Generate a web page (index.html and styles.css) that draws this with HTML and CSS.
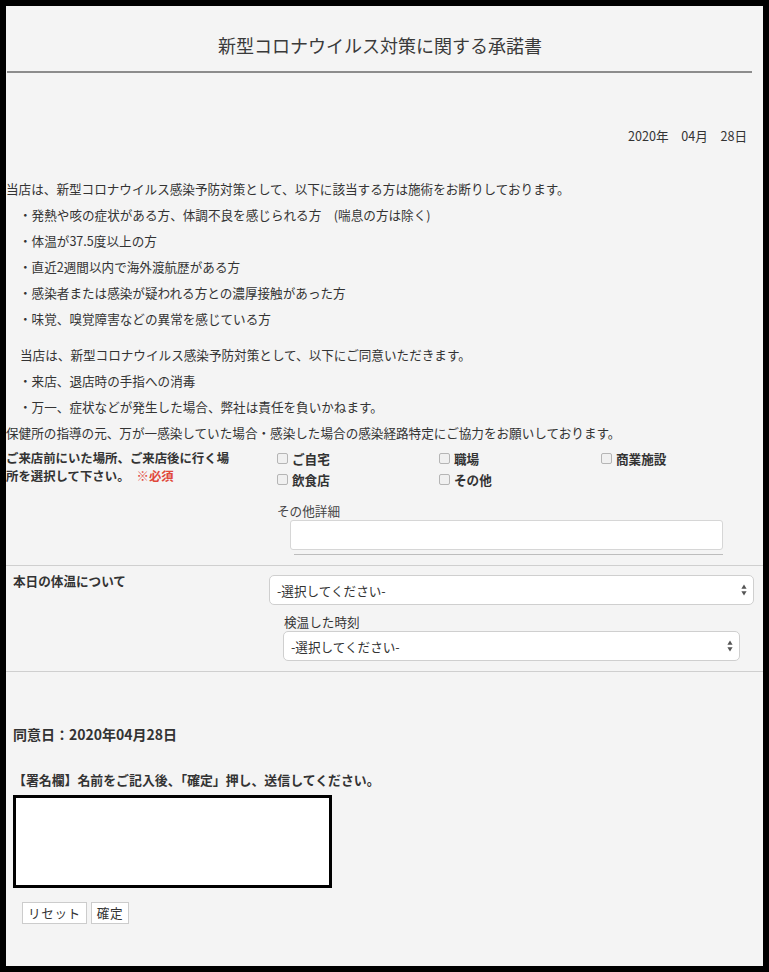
FILE: index.html
```html
<!DOCTYPE html>
<html lang="ja">
<head>
<meta charset="utf-8">
<title>新型コロナウイルス対策に関する承諾書</title>
<link rel="stylesheet" href="styles.css">
</head>
<body>
<div class="frame">
  <header class="head">
    <h1 class="title">新型コロナウイルス対策に関する承諾書</h1>
  </header>
  <div class="rule"></div>
  <p class="date">2020年　04月　28日</p>

  <div class="notice">
    <p class="line">当店は、新型コロナウイルス感染予防対策として、以下に該当する方は施術をお断りしております。</p>
    <p class="line ind">・発熱や咳の症状がある方、体調不良を感じられる方　(喘息の方は除く)</p>
    <p class="line ind">・体温が37.5度以上の方</p>
    <p class="line ind">・直近2週間以内で海外渡航歴がある方</p>
    <p class="line ind">・感染者または感染が疑われる方との濃厚接触があった方</p>
    <p class="line ind">・味覚、嗅覚障害などの異常を感じている方</p>
  </div>
  <div class="notice2">
    <p class="line ind2">当店は、新型コロナウイルス感染予防対策として、以下にご同意いただきます。</p>
    <p class="line ind">・来店、退店時の手指への消毒</p>
    <p class="line ind">・万一、症状などが発生した場合、弊社は責任を負いかねます。</p>
    <p class="line">保健所の指導の元、万が一感染していた場合・感染した場合の感染経路特定にご協力をお願いしております。</p>
  </div>

  <section class="place">
    <div class="q-label">
      <div class="q-row">ご来店前にいた場所、ご来店後に行く場</div>
      <div class="q-row q-row2"><span>所を選択して下さい。</span><span class="req">※必須</span></div>
    </div>
    <div class="place-right">
      <div class="checks">
        <label class="chk"><span class="box"></span>ご自宅</label>
        <label class="chk"><span class="box"></span>職場</label>
        <label class="chk"><span class="box"></span>商業施設</label>
        <label class="chk"><span class="box"></span>飲食店</label>
        <label class="chk"><span class="box"></span>その他</label>
      </div>
      <div class="sub-label">その他詳細</div>
      <div class="text-input"></div>
      <div class="thin"></div>
    </div>
  </section>

  <section class="temp">
    <div class="t-label">本日の体温について</div>
    <div class="temp-right">
      <div class="select sel1"><span>-選択してください-</span>
        <svg class="arr" width="6" height="12" viewBox="0 0 6 12"><path d="M3 0.5 L5.6 4.8 L0.4 4.8 Z" fill="#555"/><path d="M3 11.5 L5.6 7.2 L0.4 7.2 Z" fill="#555"/></svg>
      </div>
      <div class="time-label">検温した時刻</div>
      <div class="select sel2"><span>-選択してください-</span>
        <svg class="arr" width="6" height="12" viewBox="0 0 6 12"><path d="M3 0.5 L5.6 4.8 L0.4 4.8 Z" fill="#555"/><path d="M3 11.5 L5.6 7.2 L0.4 7.2 Z" fill="#555"/></svg>
      </div>
    </div>
  </section>

  <section class="sign">
    <p class="agree">同意日：2020年04月28日</p>
    <p class="sign-label">【署名欄】名前をご記入後、「確定」押し、送信してください。</p>
    <div class="pad"></div>
    <div class="btns">
      <button class="btn" type="button">リセット</button>
      <button class="btn" type="button">確定</button>
    </div>
  </section>
</div>
</body>
</html>
```
FILE: styles.css
```css
html, body {
  margin: 0;
  padding: 0;
  background: #000;
}
body {
  padding: 6px 6px 6px 6px;
  font-family: "Noto Sans CJK JP", "Noto Sans", sans-serif;
  color: #333;
}
.frame {
  background: #f4f4f4;
  height: 960px;
  width: 757px;
  overflow: hidden;
}
.head {
  padding: 27px 9px 0 0;
}
.title {
  margin: 0;
  font-size: 18px;
  line-height: 24px;
  font-weight: 400;
  text-align: center;
  color: #3a3a3a;
}
.rule {
  margin: 14px 11px 0 1px;
  height: 2px;
  background: #8c8c8c;
}
.date {
  margin: 53px 16px 0 0;
  text-align: right;
  font-size: 12.6px;
  line-height: 20px;
}
p { margin: 0; }
.line {
  font-size: 12.6px;
  line-height: 26px;
  white-space: nowrap;
}
.ind { padding-left: 13px; }
.ind2 { padding-left: 14px; }
.notice { margin-top: 30px; }
.notice2 { margin-top: 10px; }

.place {
  display: flex;
  padding-bottom: 10px;
  border-bottom: 1px solid #cfcfcf;
  margin-top: 2px;
}
.q-label {
  width: 240px;
  padding-top: 1px;
  font-size: 12.4px;
  line-height: 18px;
  font-weight: 700;
}
.q-row {
  white-space: nowrap;
}
.q-row2 {
  display: flex;
  gap: 7px;
}
.req {
  color: #e0473a;
}
.place-right {
  margin-left: 33px;
}
.checks {
  display: grid;
  grid-template-columns: 162px 162px 162px;
}
.chk {
  display: flex;
  align-items: center;
  height: 21px;
  font-size: 12.6px;
  font-weight: 700;
}
.box {
  width: 9px;
  height: 9px;
  border: 1px solid #b5b5b5;
  border-radius: 2px;
  background: #f0f0f0;
  margin-right: 4px;
}
.sub-label {
  margin-top: 12px;
  font-size: 12.6px;
  line-height: 18px;
  color: #444;
}
.text-input {
  margin-left: 13px;
  width: 431px;
  height: 28px;
  background: #fff;
  border: 1px solid #d6d6d6;
  border-radius: 3px;
}
.thin {
  margin: 4px 0 0 17px;
  width: 429px;
  height: 1px;
  background: #bdbdbd;
}

.temp {
  display: flex;
  padding-bottom: 10px;
  border-bottom: 1px solid #cfcfcf;
}
.t-label {
  width: 256px;
  padding: 6px 0 0 7px;
  font-size: 12.6px;
  line-height: 18px;
  font-weight: 700;
}
.temp-right {
  padding-top: 9px;
}
.select {
  display: flex;
  align-items: center;
  justify-content: space-between;
  height: 28px;
  background: #fff;
  border: 1px solid #cfcfcf;
  border-radius: 5px;
  font-size: 12.6px;
  color: #333;
  padding: 0 6px 0 7px;
}
.sel1 { width: 470px; }
.sel2 { width: 442px; margin-left: 14px; }
.time-label {
  margin: 8px 0 0 15px;
  font-size: 12.6px;
  line-height: 18px;
}

.sign {
  padding-left: 7px;
}
.agree {
  margin-top: 52px;
  font-size: 14px;
  line-height: 20px;
  font-weight: 700;
}
.sign-label {
  margin-top: 27px;
  font-size: 12.9px;
  line-height: 18px;
  font-weight: 700;
}
.pad {
  margin-top: 6px;
  width: 313px;
  height: 87px;
  background: #fff;
  border: 3px solid #000;
}
.btns {
  display: flex;
  gap: 4px;
  margin: 14px 0 0 9px;
}
.btn {
  font-family: "Noto Sans CJK JP", sans-serif;
  font-size: 12.6px;
  height: 22px;
  line-height: 20px;
  padding: 0 5px;
  background: #fff;
  border: 1px solid #cccccc;
  color: #333;
  letter-spacing: 0.6px;
  border-radius: 0;
}
```
